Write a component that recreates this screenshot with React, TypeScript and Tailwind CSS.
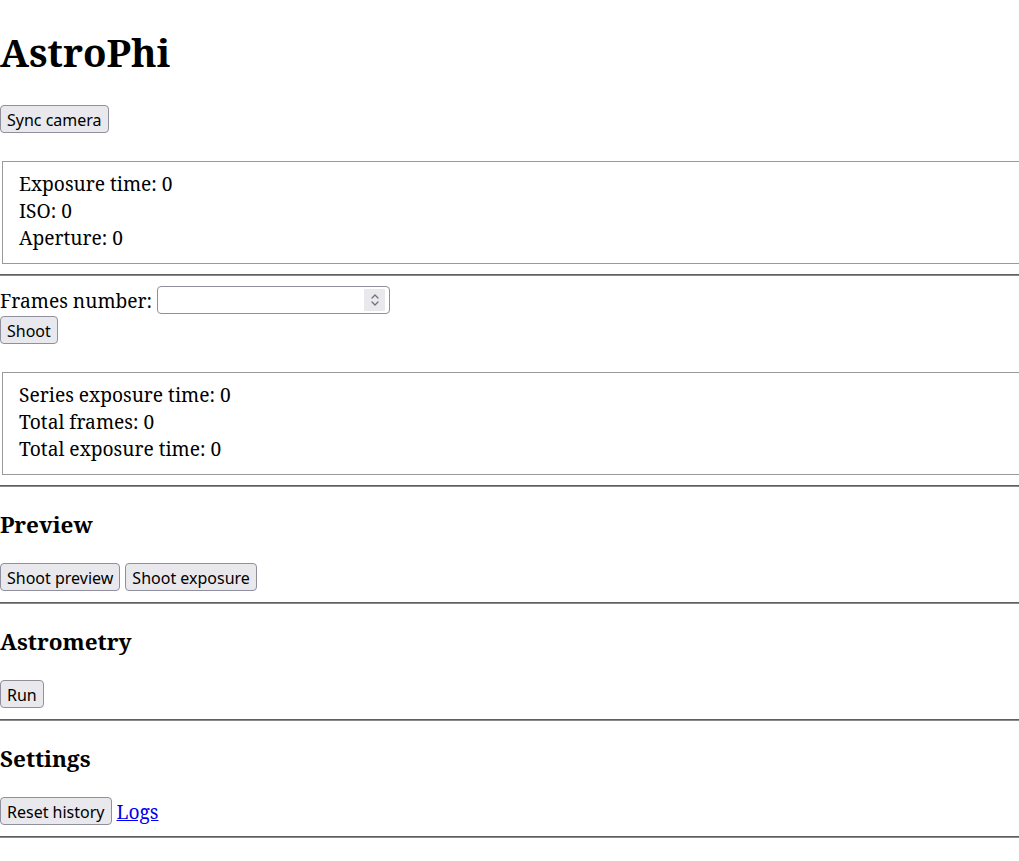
import React from "react";

function Btn({ children }: { children: React.ReactNode }) {
  return (
    <button className="h-[28px] px-[6px] pt-[2px] rounded-[4px] border border-[#8f8f9d] bg-[#e9e9ed] text-[16px] leading-[20px] text-black font-['Noto_Sans',sans-serif] align-middle">
      {children}
    </button>
  );
}

function Hr() {
  return <div className="h-[2px] border-t border-[#5f5f5f] border-b-[1px] border-b-[#8a8a8a]" />;
}

function Field({ lines }: { lines: string[] }) {
  return (
    <div className="ml-[2px] border border-[#9a9a9a] pt-[8px] pb-[12px] pl-[16px]">
      {lines.map((l) => (
        <div key={l} className="leading-[27px]">
          {l}
        </div>
      ))}
    </div>
  );
}

function H3({ children }: { children: React.ReactNode }) {
  return <h3 className="mt-[22px] mb-[23px] text-[22.5px] font-bold leading-[31px]">{children}</h3>;
}

export default function App() {
  return (
    <div className="w-[1019px] h-[861px] overflow-hidden bg-white text-black font-['Noto_Serif','DejaVu_Serif',serif] text-[19.2px]">
      <div className="w-[1060px]">
        <h1 className="mt-[26px] text-[38.4px] font-bold leading-[52px]">AstroPhi</h1>
        <div className="mt-[27px] h-[28px] flex">
          <Btn>Sync camera</Btn>
        </div>
        <div className="mt-[28px]">
          <Field lines={["Exposure time: 0", "ISO: 0", "Aperture: 0"]} />
        </div>
        <div className="mt-[10px]">
          <Hr />
        </div>
        <div className="mt-[10px] h-[28px] flex items-center">
          <span className="leading-[27px]">Frames number:</span>
          <div className="ml-[5px] w-[233px] h-[28px] border border-[#8f8f9d] rounded-[4px] bg-white flex items-center justify-end pr-[4px]">
            <div className="w-[21px] h-[22px] bg-[#e9e9ed] flex items-center justify-center">
              <svg width="12" height="16" viewBox="0 0 12 16" fill="none" stroke="#707078" strokeWidth="1.3" strokeLinecap="round" strokeLinejoin="round">
                <path d="M3 6 L6 3 L9 6" />
                <path d="M3 10 L6 13 L9 10" />
              </svg>
            </div>
          </div>
        </div>
        <div className="mt-[2px] h-[28px] flex">
          <Btn>Shoot</Btn>
        </div>
        <div className="mt-[28px]">
          <Field lines={["Series exposure time: 0", "Total frames: 0", "Total exposure time: 0"]} />
        </div>
        <div className="mt-[10px]">
          <Hr />
        </div>
        <H3>Preview</H3>
        <div className="h-[28px] flex gap-[5px]">
          <Btn>Shoot preview</Btn>
          <Btn>Shoot exposure</Btn>
        </div>
        <div className="mt-[11px]">
          <Hr />
        </div>
        <H3>Astrometry</H3>
        <div className="h-[28px] flex">
          <Btn>Run</Btn>
        </div>
        <div className="mt-[11px]">
          <Hr />
        </div>
        <H3>Settings</H3>
        <div className="h-[28px] flex items-center gap-[5px]">
          <Btn>Reset history</Btn>
          <a href="#" className="text-[#0000ee] underline leading-[27px]">
            Logs
          </a>
        </div>
        <div className="mt-[11px]">
          <Hr />
        </div>
      </div>
    </div>
  );
}
